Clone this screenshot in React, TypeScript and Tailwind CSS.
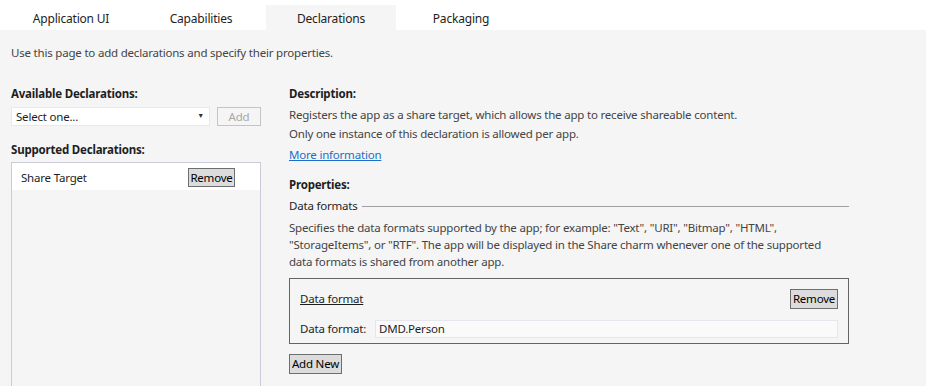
import React from "react"

const font = { fontFamily: '"Segoe UI", "Noto Sans", Roboto, sans-serif' }

function Tabs() {
    const tabs = ["Application UI", "Capabilities", "Declarations", "Packaging"]
    return (
        <div className="flex h-[30px] bg-white pl-[6px]">
            {tabs.map((t) => (
                <div
                    key={t}
                    className={
                        "mt-[5px] flex w-[130px] items-center justify-center pt-[3px] text-[12px] text-[#1e1e1e] " +
                        (t === "Declarations" ? "bg-[#f5f5f5]" : "")
                    }
                >
                    {t}
                </div>
            ))}
        </div>
    )
}

export default function App() {
    return (
        <div
            className="h-[386px] w-[926px] overflow-hidden bg-[#f5f5f5] text-[11.5px] tracking-[-0.2px] text-[#333]"
            style={font}
        >
            <Tabs />
            <div className="px-[11px] pt-[14px] leading-[18px] text-[#444]">
                Use this page to add declarations and specify their properties.
            </div>

            <div className="mt-[23px] flex gap-[28px] pl-[11px]">
                {/* left column */}
                <div className="w-[250px]">
                    <div className="font-bold leading-[18px] text-[#1e1e1e]">Available Declarations:</div>
                    <div className="mt-[4px] flex h-[19px] items-center gap-[7px]">
                        <div className="flex h-full w-[199px] items-center justify-between border border-[#e8e8ee] bg-white pl-[4px] pr-[5px] text-[#1e1e1e]">
                            <span>Select one...</span>
                            <span className="text-[7px] text-[#333]">▼</span>
                        </div>
                        <div className="flex h-[19px] w-[44px] items-center justify-center border border-[#c4c4c4] text-[#a8a8a8]">
                            Add
                        </div>
                    </div>
                    <div className="mt-[15px] font-bold leading-[18px] text-[#1e1e1e]">Supported Declarations:</div>
                    <div className="mt-[3px] h-[240px] border border-[#cacad8]">
                        <div className="flex h-[27px] items-center justify-between bg-white pl-[9px] pr-[25px] pt-[2px] text-[#1e1e1e]">
                            <span>Share Target</span>
                            <span className="flex h-[19px] w-[47px] items-center justify-center border border-[#6e6e6e] bg-[#dcdcdc] text-black">
                                Remove
                            </span>
                        </div>
                    </div>
                </div>

                {/* right column */}
                <div className="w-[560px]">
                    <div className="font-bold leading-[18px] text-[#1e1e1e]">Description:</div>
                    <div className="mt-[2px] leading-[19px] text-[#444]">
                        Registers the app as a share target, which allows the app to receive shareable content.
                    </div>
                    <div className="leading-[19px] text-[#444]">Only one instance of this declaration is allowed per app.</div>
                    <div className="mt-[2px] leading-[19px] text-[#1a6fc9] underline">More information</div>

                    <div className="mt-[12px] font-bold leading-[18px] text-[#1e1e1e]">Properties:</div>
                    <div className="mt-[3px] flex items-center gap-[4px] leading-[18px] text-[#1e1e1e]">
                        <span>Data formats</span>
                        <div className="h-px flex-1 bg-[#a0a0a0]" />
                    </div>
                    <div className="mt-[4px] w-[550px] leading-[17px] text-[#444]">
                        Specifies the data formats supported by the app; for example: "Text", "URI", "Bitmap", "HTML",
                        "StorageItems", or "RTF". The app will be displayed in the Share charm whenever one of the supported
                        data formats is shared from another app.
                    </div>

                    <div className="mt-[8px] h-[66px] border border-[#646464] pl-[10px] pr-[10px] pt-[10px]">
                        <div className="flex h-[20px] items-center justify-between">
                            <span className="text-[#1e1e1e] underline">Data format</span>
                            <span className="flex h-[20px] w-[48px] items-center justify-center border border-[#6e6e6e] bg-[#dcdcdc] text-black">
                                Remove
                            </span>
                        </div>
                        <div className="mt-[11px] flex h-[18px] items-center">
                            <span className="w-[75px] text-[#1e1e1e]">Data format:</span>
                            <div className="flex h-full flex-1 items-center border border-[#e6e6f0] bg-[#fafafa] pl-[3px] text-[#1e1e1e]">
                                DMD.Person
                            </div>
                        </div>
                    </div>

                    <div className="mt-[10px] flex h-[20px] w-[53px] items-center justify-center border border-[#6e6e6e] bg-[#dcdcdc] text-black">
                        Add New
                    </div>
                </div>
            </div>
        </div>
    )
}
